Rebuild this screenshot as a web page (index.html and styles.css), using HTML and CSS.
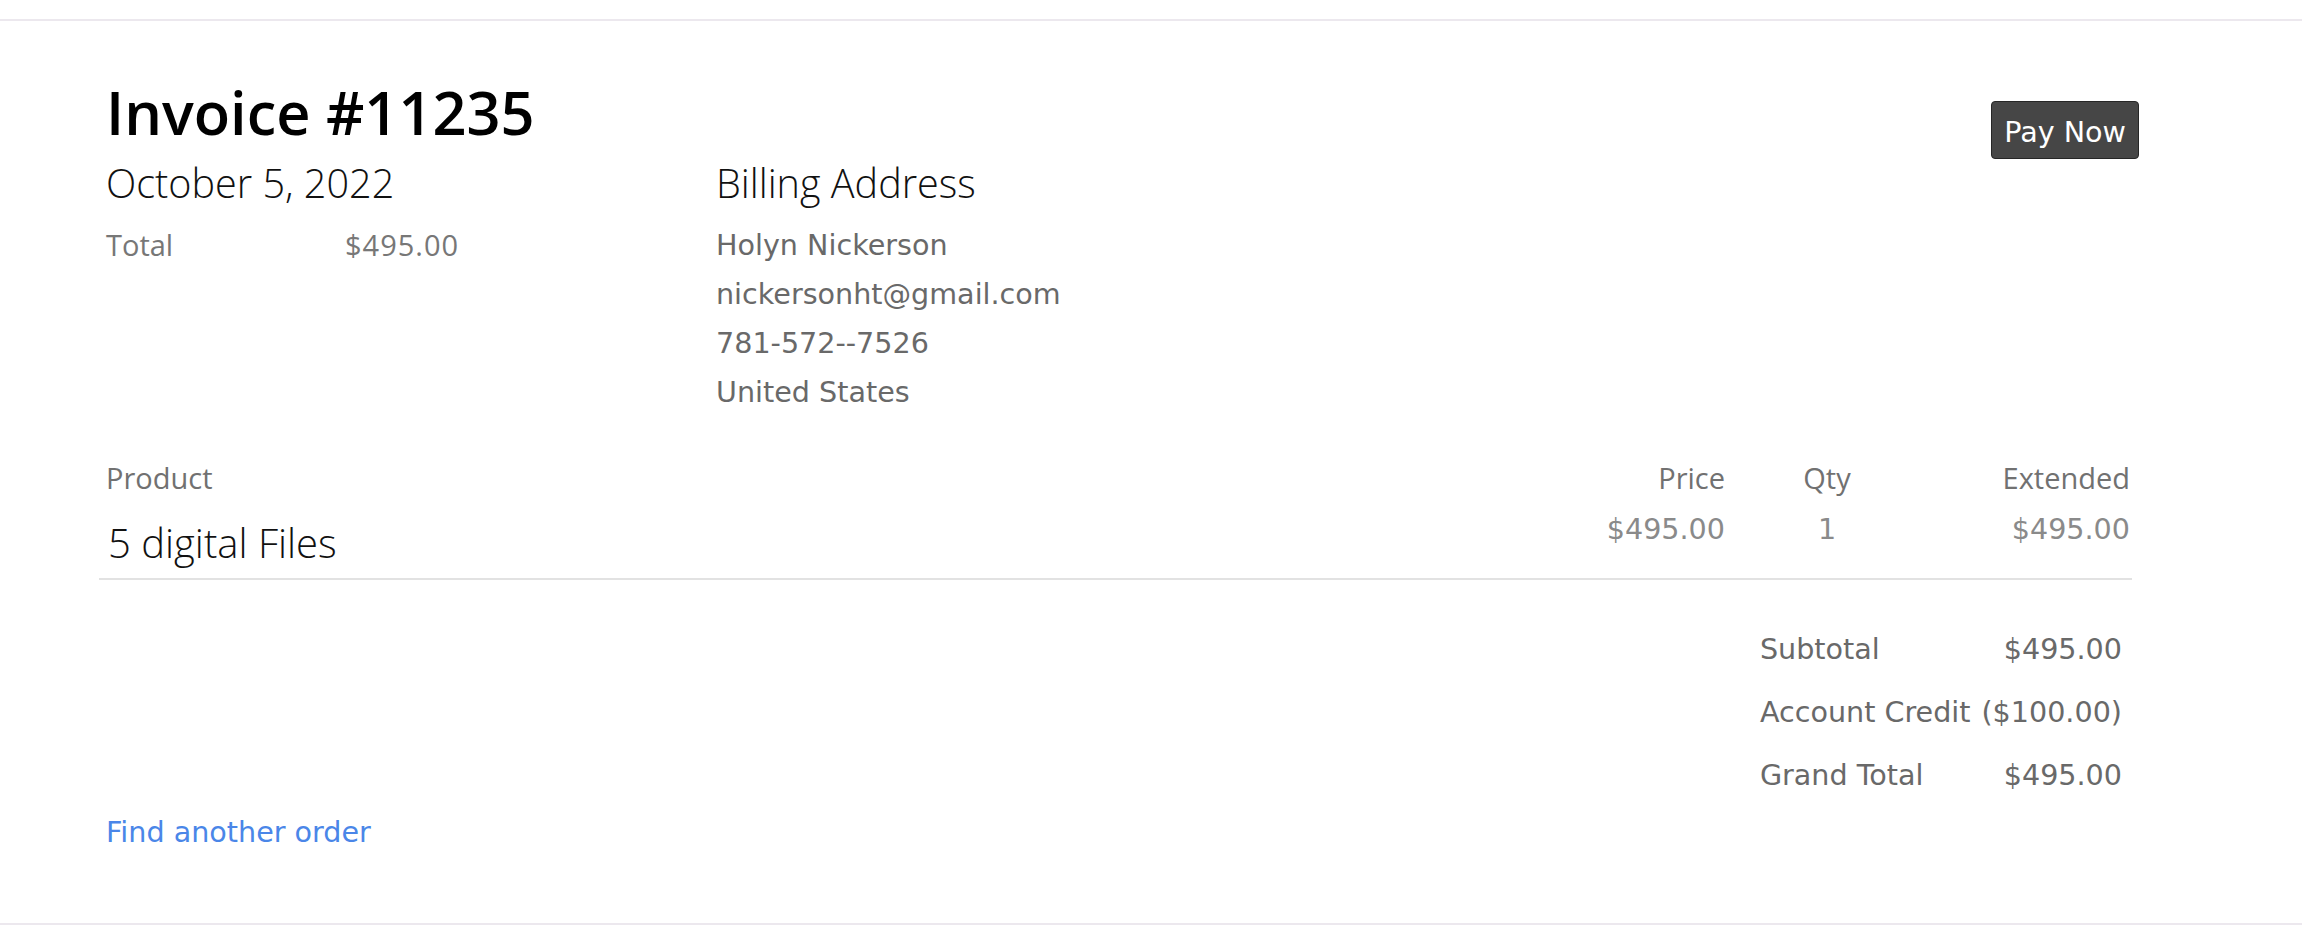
FILE: index.html
```html
<!DOCTYPE html>
<html lang="en">
<head>
  <meta charset="UTF-8">
  <meta name="viewport" content="width=device-width, initial-scale=1.0">
  <title>Invoice #11235</title>
  <link rel="stylesheet" href="styles.css">
</head>
<body>
  <div class="sheet">
    <div class="invoice">

      <div class="invoice-head">
        <h1>Invoice #11235</h1>
        <button type="button" class="pay-btn">Pay Now</button>
      </div>

      <div class="details">
        <div class="summary">
          <h2>October 5, 2022</h2>
          <div class="summary-row">
            <span>Total</span>
            <span class="summary-amount">$495.00</span>
          </div>
        </div>
        <div class="billing">
          <h2>Billing Address</h2>
          <ul class="address">
            <li>Holyn Nickerson</li>
            <li>nickersonht@gmail.com</li>
            <li>781-572--7526</li>
            <li>United States</li>
          </ul>
        </div>
      </div>

      <div class="items">
        <div class="items-row items-head">
          <span class="col-product">Product</span>
          <span class="col-price">Price</span>
          <span class="col-qty">Qty</span>
          <span class="col-ext">Extended</span>
        </div>
        <div class="items-row items-line">
          <span class="col-product">5 digital Files</span>
          <span class="col-price">$495.00</span>
          <span class="col-qty">1</span>
          <span class="col-ext">$495.00</span>
        </div>
      </div>

      <div class="totals">
        <span>Subtotal</span>
        <span class="num">$495.00</span>
        <span>Account Credit</span>
        <span class="num">($100.00)</span>
        <span>Grand Total</span>
        <span class="num">$495.00</span>
      </div>

      <a class="find-link" href="#">Find another order</a>

    </div>
  </div>
</body>
</html>
```

FILE: styles.css
```css
body {
  margin: 0;
  font-family: "DejaVu Sans", Verdana, sans-serif;
  font-size: 28.6px;
  color: #666;
  background: #fff;
}
.sheet {
  margin-top: 19px;
  border-top: 2px solid #ece8ee;
  border-bottom: 2px solid #ece8ee;
}
.invoice {
  padding: 55px 163px 74px 106px;
}

/* header */
.invoice-head {
  display: flex;
  justify-content: space-between;
  align-items: flex-start;
}
h1 {
  margin: 0;
  font-family: "Open Sans", sans-serif;
  font-size: 59.5px;
  font-weight: 600;
  line-height: 72px;
  color: #000;
}
.pay-btn {
  margin-top: 25px;
  padding: 14px 12px 10px;
  font-family: "DejaVu Sans", Verdana, sans-serif;
  font-size: 28.6px;
  line-height: 32px;
  color: #fff;
  background-color: #464646;
  border: 1px solid #262626;
  border-radius: 4px;
  cursor: pointer;
}

/* date + billing */
.details {
  display: flex;
}
h2 {
  margin: 0;
  font-family: "Open Sans", sans-serif;
  font-size: 39.6px;
  font-weight: 300;
  line-height: 48px;
  color: #111;
}
.summary {
  width: 610px;
}
.summary-row {
  display: grid;
  grid-template-columns: 239px auto;
  margin-top: 13px;
  font-family: "Open Sans", sans-serif;
  font-size: 29px;
  line-height: 49px;
  color: #777;
}
.summary-amount {
  letter-spacing: 1px;
}
.address {
  list-style: none;
  margin: 14px 0 0;
  padding: 0;
  line-height: 49px;
  color: #696969;
}

/* line items */
.items {
  margin: 41px 7px 0 -7px;
}
.items-row {
  display: grid;
  grid-template-columns: 1fr 200px 200px 205px;
  align-items: start;
}
.items-head {
  font-family: "Open Sans", sans-serif;
  font-size: 29px;
  line-height: 40px;
  color: #717171;
}
.items-line {
  margin-top: 15px;
  padding-bottom: 11px;
  border-bottom: 2px solid #e2e2e2;
  line-height: 33px;
  color: #8a8a8a;
}
.items-line .col-product {
  margin-top: 6px;
  padding-left: 9px;
  font-family: "Open Sans", sans-serif;
  font-size: 40px;
  font-weight: 300;
  line-height: 48px;
  color: #111;
}
.col-product {
  padding-left: 7px;
}
.col-price,
.col-ext {
  text-align: right;
  padding-right: 2px;
}
.col-qty {
  text-align: center;
}

/* totals */
.totals {
  display: grid;
  grid-template-columns: auto auto;
  justify-content: end;
  column-gap: 11px;
  margin: 38px 17px 0 0;
  line-height: 63px;
  color: #696969;
}
.totals .num {
  text-align: right;
}

.find-link {
  display: inline-block;
  margin-top: 8px;
  color: #4a86e8;
  text-decoration: none;
}
```
